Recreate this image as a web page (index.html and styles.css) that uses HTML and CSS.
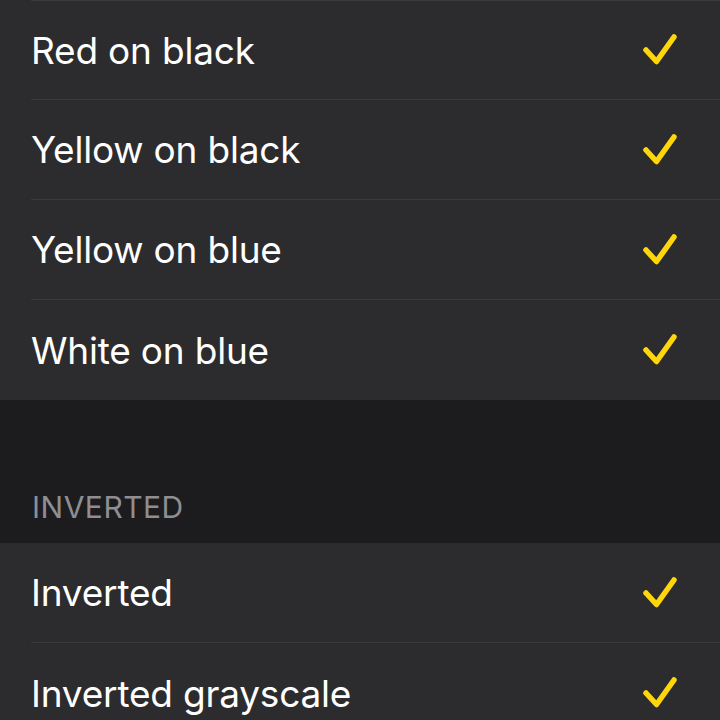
FILE: index.html
```html
<!DOCTYPE html>
<html lang="en">
<head>
    <meta charset="UTF-8">
    <title>Color Filters</title>
    <meta name="viewport" content="width=device-width, initial-scale=1.0">
    <link rel="stylesheet" href="styles.css">
</head>
<body>
    <div class="group">
        <div class="row first">
            <div class="row-inner">
                <span class="label">Red on black</span>
                <svg class="check" width="36" height="36" viewBox="0 0 36 36"><path d="M3 17 L13.5 28.5 L31 4" /></svg>
            </div>
        </div>
        <div class="row">
            <div class="row-inner">
                <span class="label">Yellow on black</span>
                <svg class="check" width="36" height="36" viewBox="0 0 36 36"><path d="M3 17 L13.5 28.5 L31 4" /></svg>
            </div>
        </div>
        <div class="row">
            <div class="row-inner">
                <span class="label">Yellow on blue</span>
                <svg class="check" width="36" height="36" viewBox="0 0 36 36"><path d="M3 17 L13.5 28.5 L31 4" /></svg>
            </div>
        </div>
        <div class="row last">
            <div class="row-inner">
                <span class="label">White on blue</span>
                <svg class="check" width="36" height="36" viewBox="0 0 36 36"><path d="M3 17 L13.5 28.5 L31 4" /></svg>
            </div>
        </div>
    </div>

    <div class="section-header">INVERTED</div>

    <div class="group">
        <div class="row">
            <div class="row-inner">
                <span class="label">Inverted</span>
                <svg class="check" width="36" height="36" viewBox="0 0 36 36"><path d="M3 17 L13.5 28.5 L31 4" /></svg>
            </div>
        </div>
        <div class="row last">
            <div class="row-inner">
                <span class="label">Inverted grayscale</span>
                <svg class="check" width="36" height="36" viewBox="0 0 36 36"><path d="M3 17 L13.5 28.5 L31 4" /></svg>
            </div>
        </div>
    </div>
</body>
</html>
```

FILE: styles.css
```css
:root {
    --page-bg: #1c1c1e;
    --cell-bg: #2c2c2e;
    --separator: #3a3a3c;
    --text: #ffffff;
    --secondary: #8e8e93;
    --accent: #ffd60a;
}
body {
    margin: 0;
    padding: 0;
    background: var(--page-bg);
    font-family: Inter, 'Noto Sans', sans-serif;
    color: var(--text);
    overflow: hidden;
}
.group {
    background: var(--cell-bg);
}
.row {
    padding-left: 31px;
}
.row.first .row-inner {
    border-top: 1px solid var(--separator);
    height: 98px;
}
.row-inner {
    height: 99px;
    display: flex;
    align-items: center;
    justify-content: space-between;
    padding-right: 41px;
    border-bottom: 1px solid var(--separator);
}
.row.last .row-inner {
    border-bottom: none;
    height: 100px;
}
.label {
    font-size: 37px;
    letter-spacing: -0.2px;
}
.check {
    display: block;
    margin-top: 2px;
}
.check path {
    fill: none;
    stroke: var(--accent);
    stroke-width: 5.5;
    stroke-linecap: round;
    stroke-linejoin: round;
}
.section-header {
    height: 143px;
    box-sizing: border-box;
    padding: 89px 0 0 32px;
    font-size: 30px;
    letter-spacing: 0.5px;
    color: var(--secondary);
}
```
